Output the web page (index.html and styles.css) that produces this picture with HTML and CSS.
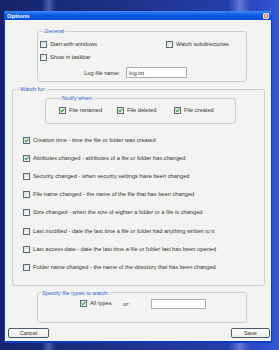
FILE: index.html
```html
<!DOCTYPE html>
<html lang="en">
<head>
    <meta charset="UTF-8">
    <title>Options</title>
    <link rel="stylesheet" href="styles.css">
</head>
<body>
    <div class="window">
        <div class="titlebar">
            <span class="title">Options</span>
            <span class="close">
                <svg width="4" height="4" viewBox="0 0 4 4"><path d="M0.5 0.5 L3.5 3.5 M3.5 0.5 L0.5 3.5" stroke="#fff" stroke-width="0.9"/></svg>
            </span>
        </div>

        <div class="client">
            <fieldset class="group general">
                <legend>General</legend>
                <div class="general-grid">
                    <label class="opt"><span class="box"></span>Start with windows</label>
                    <label class="opt"><span class="box"></span>Watch subdirectories</label>
                    <label class="opt"><span class="box"></span>Show in taskbar</label>
                </div>
                <div class="log-row">
                    <span class="log-label">Log file name:</span>
                    <span class="field log-field">log.txt</span>
                </div>
            </fieldset>

            <fieldset class="group watch">
                <legend>Watch for:</legend>
                <fieldset class="group notify">
                    <legend>Notify when:</legend>
                    <div class="notify-grid">
                        <label class="opt"><span class="box on"><svg width="5" height="5" viewBox="0 0 5 5"><path d="M0.8 2.4 L2 3.7 L4.3 1" fill="none" stroke="#22a02a" stroke-width="1.1"/></svg></span>File renamed</label>
                        <label class="opt"><span class="box on"><svg width="5" height="5" viewBox="0 0 5 5"><path d="M0.8 2.4 L2 3.7 L4.3 1" fill="none" stroke="#22a02a" stroke-width="1.1"/></svg></span>File deleted</label>
                        <label class="opt"><span class="box on"><svg width="5" height="5" viewBox="0 0 5 5"><path d="M0.8 2.4 L2 3.7 L4.3 1" fill="none" stroke="#22a02a" stroke-width="1.1"/></svg></span>File created</label>
                    </div>
                </fieldset>

                <div class="watch-list">
                    <label class="opt"><span class="box on"><svg width="5" height="5" viewBox="0 0 5 5"><path d="M0.8 2.4 L2 3.7 L4.3 1" fill="none" stroke="#22a02a" stroke-width="1.1"/></svg></span>Creation time - time the file or folder was created</label>
                    <label class="opt"><span class="box on"><svg width="5" height="5" viewBox="0 0 5 5"><path d="M0.8 2.4 L2 3.7 L4.3 1" fill="none" stroke="#22a02a" stroke-width="1.1"/></svg></span>Attributes changed - attributes of a file or folder has changed</label>
                    <label class="opt"><span class="box"></span>Security changed - when security settings have been changed</label>
                    <label class="opt"><span class="box"></span>File name changed - the name of the file that has been changed</label>
                    <label class="opt"><span class="box"></span>Size changed - when the size of eighter a folder or a file is changed</label>
                    <label class="opt"><span class="box"></span>Last modified - date the last time a file or folder had anything written to it</label>
                    <label class="opt"><span class="box"></span>Last access date - date the last time a file or folder last has been opened</label>
                    <label class="opt"><span class="box"></span>Folder name changed - the name of the directory that has been changed</label>
                </div>
            </fieldset>

            <fieldset class="group types">
                <legend>Specify file types to watch:</legend>
                <div class="types-row">
                    <label class="opt types-check"><span class="box on"><svg width="5" height="5" viewBox="0 0 5 5"><path d="M0.8 2.4 L2 3.7 L4.3 1" fill="none" stroke="#22a02a" stroke-width="1.1"/></svg></span>All types</label>
                    <span class="or-label">or:</span>
                    <span class="field types-field"></span>
                </div>
            </fieldset>

            <div class="buttons">
                <button class="btn cancel">Cancel</button>
                <button class="btn save">Save</button>
            </div>
        </div>
    </div>
</body>
</html>
```

FILE: styles.css
```css
* {
    box-sizing: border-box;
}
body {
    margin: 0;
    height: 350px;
    padding: 11px 0 0 4px;
    overflow: hidden;
    font-family: "Liberation Sans", Arial, sans-serif;
    font-size: 5.7px;
    color: #333;
    background:
        linear-gradient(90deg, transparent 15%, rgba(140, 160, 255, 0.45) 17.5%, transparent 20%),
        linear-gradient(90deg, transparent 82%, rgba(170, 170, 255, 0.5) 86%, transparent 90%),
        linear-gradient(90deg, #15246c 0%, #1f3288 45%, #2440b0 85%, #3359dc 100%);
}
.window {
    width: 268px;
    height: 332px;
    display: flex;
    flex-direction: column;
    border: 1px solid #0b3cc4;
    border-top: 0;
    border-bottom-width: 2px;
    background: #f3f3f1;
}
.titlebar {
    height: 9px;
    margin: 0 -1px;
    padding: 0 3px;
    display: flex;
    align-items: center;
    justify-content: space-between;
    background: linear-gradient(#3f8cf6, #0a5ae2 45%, #0550d6);
    border-radius: 3px 3px 0 0;
    color: #fff;
    font-weight: bold;
    font-size: 6px;
}
.close {
    width: 6px;
    height: 6px;
    display: flex;
    align-items: center;
    justify-content: center;
    background: #dc6a4c;
    border: 0.5px solid #f6d6cc;
    border-radius: 1px;
}
.client {
    flex: 1;
    padding-top: 8px;
    display: flex;
    flex-direction: column;
}

/* group boxes */
.group {
    margin: 0;
    padding: 0;
    border: 1px solid #cfd0c9;
    border-radius: 3px;
}
.group legend {
    padding: 0 1px;
    line-height: 6px;
    color: #2b5fd1;
}
.general {
    width: 210px;
    margin-left: 32px;
    padding: 7px 0 3px 2px;
}
.general legend {
    margin-left: 3px;
}
.watch {
    width: 253px;
    margin: 4px 0 0 7px;
    padding-bottom: 8px;
}
.watch legend {
    margin-left: 6px;
}
.notify {
    width: 191px;
    margin: 3px 0 0 32px;
    padding: 6px 0 9px 13px;
}
.notify legend {
    margin-left: 2px;
}
.types {
    width: 210px;
    margin: 4px 0 0 32px;
    padding: 3.4px 0 13px 42px;
}
.types legend {
    margin-left: -39px;
}

/* checkboxes */
.opt {
    display: flex;
    align-items: center;
    gap: 3px;
    height: 7px;
    line-height: 7px;
    white-space: nowrap;
}
.box {
    width: 7px;
    height: 7px;
    flex: none;
    display: flex;
    align-items: center;
    justify-content: center;
    border: 1px solid #566a7e;
    background: linear-gradient(135deg, #dcdcd6, #fbfbf9);
}
.general-grid {
    display: grid;
    grid-template-columns: 126px auto;
    row-gap: 6px;
}
.log-row {
    margin-top: 6px;
    display: flex;
    align-items: center;
    gap: 6px;
}
.log-label {
    width: 80px;
    text-align: right;
}
.field {
    display: flex;
    align-items: center;
    padding-left: 2px;
    background: #fff;
    border: 1px solid #a8afb8;
}
.log-field {
    width: 61px;
    height: 11px;
}
.notify-grid {
    display: grid;
    grid-template-columns: 58px 57px auto;
}
.watch-list {
    margin-top: 7px;
    padding-left: 10px;
    display: grid;
    grid-auto-rows: 18.2px;
    align-items: center;
}
.types-row {
    height: 10px;
    display: flex;
    align-items: center;
}
.types-check {
    width: 43px;
}
.or-label {
    width: 28px;
}
.types-field {
    width: 55px;
    height: 10px;
}

/* buttons */
.buttons {
    margin-top: 5px;
    padding: 0 1px 0 3px;
    display: flex;
    justify-content: space-between;
}
.btn {
    height: 10px;
    padding: 0;
    font-family: inherit;
    font-size: 5.7px;
    color: #333;
    border: 1px solid #4a5a70;
    border-radius: 2px;
    background: linear-gradient(#fdfdfb, #ecebe6);
}
.cancel {
    width: 41px;
}
.save {
    width: 39px;
}
```
